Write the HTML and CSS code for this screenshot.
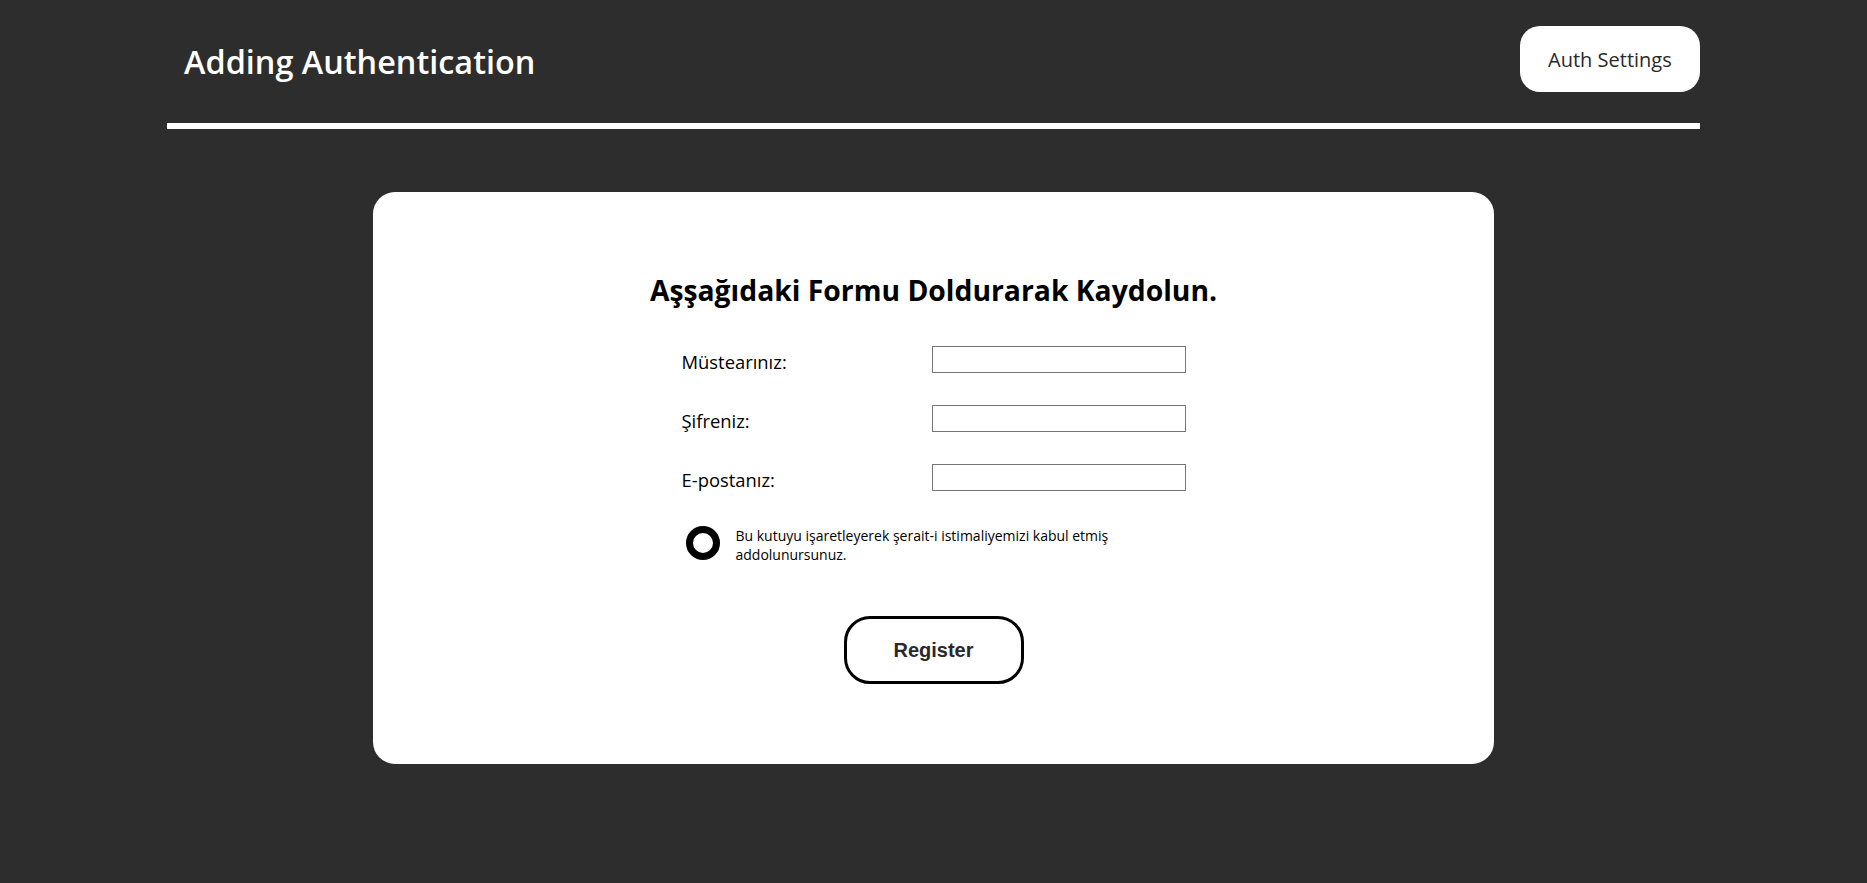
FILE: index.html
```html
<!DOCTYPE html>
<html lang="tr">
<head>
<meta charset="utf-8">
<title>Adding Authentication</title>
<link rel="stylesheet" href="styles.css">
</head>
<body>
  <header class="topbar">
    <h1 class="brand">Adding Authentication</h1>
    <button class="settings-btn" type="button">Auth Settings</button>
  </header>
  <main class="card">
    <h2 class="form-title">Aşşağıdaki Formu Doldurarak Kaydolun.</h2>
    <form class="reg-form">
      <div class="fields">
        <label class="field-label" for="user">Müstearınız:</label>
        <input class="field-input" id="user" type="text">
        <label class="field-label" for="pass">Şifreniz:</label>
        <input class="field-input" id="pass" type="password">
        <label class="field-label" for="mail">E-postanız:</label>
        <input class="field-input" id="mail" type="email">
      </div>
      <div class="agree">
        <input class="agree-box" id="agree" type="checkbox">
        <label class="agree-text" for="agree">Bu kutuyu işaretleyerek şerait-i istimaliyemizi kabul etmiş addolunursunuz.</label>
      </div>
      <div class="actions">
        <button class="register-btn" type="button">Register</button>
      </div>
    </form>
  </main>
</body>
</html>
```

FILE: styles.css
```css
* { box-sizing: border-box; }

html, body {
  margin: 0;
  padding: 0;
  background: #2d2d2d;
  font-family: "Open Sans", "Noto Sans", sans-serif;
}

body { min-height: 883px; }

.topbar {
  width: 82.1%;
  margin: 0 auto;
  display: flex;
  align-items: center;
  justify-content: space-between;
  padding: 26px 0 31px 17px;
  border-bottom: 6px solid #ffffff;
}

.brand {
  margin: 5px 0 0;
  color: #ffffff;
  font-size: 32.4px;
  font-weight: 600;
  line-height: 1.2;
}

.settings-btn {
  width: 180px;
  height: 66px;
  border: none;
  border-radius: 20px;
  background: #ffffff;
  color: #2a2a2a;
  font-family: "Open Sans", "Noto Sans", sans-serif;
  font-size: 20px;
  cursor: pointer;
}

.card {
  width: 60%;
  margin: 63px auto 0;
  background: #ffffff;
  border-radius: 22px;
  padding: 81px 0 80px;
  display: flex;
  flex-direction: column;
  align-items: center;
}

.form-title {
  margin: 0;
  font-size: 28.3px;
  font-weight: 700;
  line-height: 34px;
  color: #000000;
  text-align: center;
}

.reg-form {
  width: 504px;
  margin-top: 39px;
  display: flex;
  flex-direction: column;
}

.fields {
  display: grid;
  grid-template-columns: 250px 254px;
  grid-auto-rows: 27px;
  row-gap: 32px;
  align-items: start;
}

.field-label {
  font-size: 18.4px;
  line-height: 27px;
  padding-top: 2px;
  color: #000000;
}

.field-input {
  width: 254px;
  height: 27px;
  border: 1px solid #767676;
  border-radius: 0;
  background: #ffffff;
  padding: 1px 2px;
  font-size: 14px;
}

.agree {
  margin-top: 33px;
  padding-left: 4px;
  display: flex;
  align-items: center;
  gap: 16px;
}

.agree-box {
  appearance: none;
  -webkit-appearance: none;
  flex: none;
  margin: 0;
  width: 34px;
  height: 34px;
  border: 7px solid #000000;
  border-radius: 50%;
  background: #ffffff;
}

.agree-text {
  max-width: 440px;
  margin: 2px 0 -2px;
  font-size: 14px;
  line-height: 19px;
  color: #000000;
}

.actions {
  margin-top: 54px;
  display: flex;
  justify-content: center;
}

.register-btn {
  width: 180px;
  height: 68px;
  border: 3px solid #000000;
  border-radius: 26px;
  background: #ffffff;
  color: #2a2a2a;
  font-family: "Liberation Sans", Arial, sans-serif;
  font-size: 20px;
  font-weight: 700;
  cursor: pointer;
}
```
